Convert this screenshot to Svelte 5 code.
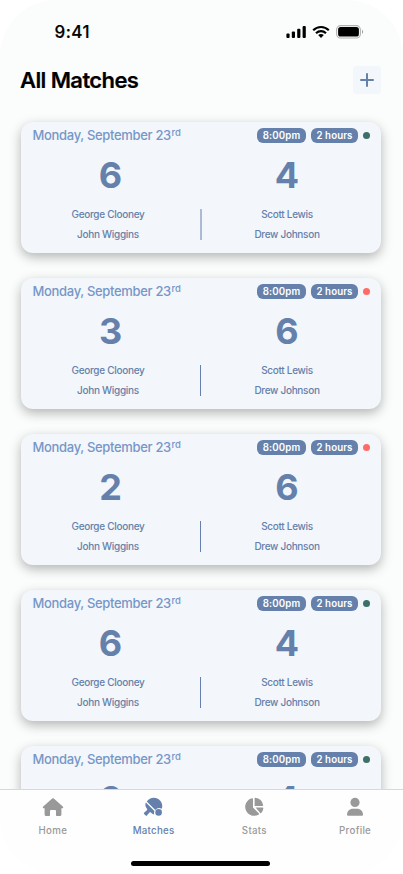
<script>
  const matches = [
    { home: 6, away: 4, status: 'won' },
    { home: 3, away: 6, status: 'lost' },
    { home: 2, away: 6, status: 'lost' },
    { home: 6, away: 4, status: 'won' },
    { home: 6, away: 4, status: 'won' }
  ];
</script>

<div class="phone">
  <div class="status">
    <span class="clock">9:41</span>
    <div class="system">
      <svg width="20" height="14" viewBox="0 0 20 14">
        <rect x="0.4" y="8.6" width="3.2" height="4.4" rx="1" />
        <rect x="5.8" y="6.4" width="3.2" height="6.6" rx="1" />
        <rect x="11.2" y="3.7" width="3.2" height="9.3" rx="1" />
        <rect x="16.6" y="1" width="3.2" height="12" rx="1" />
      </svg>
      <svg class="wifi" width="18" height="14" viewBox="0 0 18 14">
        <g fill="none" stroke="#000" stroke-width="2.1">
          <path d="M1.2 5.3C5.6.8 12.4.8 16.8 5.3" />
          <path d="M4 8.3c2.9-2.9 7.1-2.9 10 0" />
        </g>
        <path d="M6.2 10.1c1.6-1.5 4-1.5 5.6 0L9 13z" />
      </svg>
      <svg class="battery" width="28" height="14" viewBox="0 0 28 14">
        <rect x="0.6" y="0.6" width="23.8" height="12.4" rx="4" fill="none" stroke="#b0b1b0" stroke-width="1.1" />
        <rect x="2.1" y="2.1" width="20.8" height="9.4" rx="2.6" />
        <path d="M26 4.8v4.1c1.6-.7 1.6-3.4 0-4.1z" fill="#a5a6a5" />
      </svg>
    </div>
  </div>

  <header>
    <h1>All Matches</h1>
    <button aria-label="Add match">
      <svg width="14" height="14" viewBox="0 0 14 14">
        <path d="M7 1v12M1 7h12" fill="none" stroke="#6581ab" stroke-width="2" stroke-linecap="round" />
      </svg>
    </button>
  </header>

  <main>
    {#each matches as match, i}
      <article>
        <div class="top">
          <span class="date">Monday, September 23<sup>rd</sup></span>
          <span class="pill time">8:00pm</span>
          <span class="pill length">2 hours</span>
          <i class="dot {match.status}"></i>
        </div>
        <div class="teams">
          <section class="left">
            <strong>{match.home}</strong>
            <p>George Clooney</p>
            <p>John Wiggins</p>
          </section>
          <div class="divider" class:soft={i === 0}></div>
          <section class="right">
            <strong>{match.away}</strong>
            <p>Scott Lewis</p>
            <p>Drew Johnson</p>
          </section>
        </div>
      </article>
    {/each}
  </main>

  <footer>
    <nav>
      <div class="tab">
        <svg width="22" height="20" viewBox="0 0 22 20">
          <path d="M10.2 1.5q.8-.7 1.6 0l9 8q.8.8.2 1.4-.3.3-.9.3h-.7v6.4q0 1.5-1.5 1.5h-2.7q-1.2 0-1.2-1.2V14q0-1-1-1h-4q-1 0-1 1v3.9q0 1.2-1.2 1.2H4.1q-1.5 0-1.5-1.5v-6.4h-.7q-.6 0-.9-.3-.6-.6.2-1.4z" />
        </svg>
        <span>Home</span>
      </div>
      <div class="tab active">
        <svg class="paddle" width="20" height="20" viewBox="0 0 20 20">
          <path d="M3.8 4.6C6.6-.1 13.600-.4 17 3.400c2.300 2.500 2.800 5.700 1.700 8.300a5 5 0 0 0-6.400 1.400z" />
          <path d="M2.900 5.600 11.400 14.100a5 5 0 0 0-.2 3.400c-1.300-.2-2.300-.9-3.300-1.900-.5-.4-1-.4-1.400 0L3.900 18.600q-.6.6-1.200 0L1.100 17q-.6-.6 0-1.200l2.800-2.500c.5-.5.5-1 .1-1.500C2.300 10 1.900 7.700 2.900 5.600z" />
          <circle cx="15.600" cy="15.400" r="3.300" />
        </svg>
        <span>Matches</span>
      </div>
      <div class="tab">
        <svg width="20" height="20" viewBox="0 0 20 20">
          <path d="M9 1.9V10.6l5.9 5.9q.5.5 0 .9A8.9 8.900 0 1 1 8.200 1.200Q9 1.100 9 1.900z" />
          <path d="M10.6 1.4q0-.8.8-.7a8.700 8.700 0 0 1 7.800 7.500q.1.800-.7.800h-7.900z" />
          <path d="M11.600 10.500h7.100q.8 0 .7.800a8.200 8.200 0 0 1-2.200 4.700q-.5.500-1 0z" />
        </svg>
        <span>Stats</span>
      </div>
      <div class="tab">
        <svg width="20" height="20" viewBox="0 0 20 20">
          <circle cx="10" cy="5.4" r="4.6" />
          <path d="M2 17.700c0-3.400 2.500-6 6-6h4c3.500 0 6 2.600 6 6q0 1.100-1.100 1.100H3.100Q2 18.800 2 17.700z" />
        </svg>
        <span>Profile</span>
      </div>
    </nav>
    <div class="indicator"></div>
  </footer>
</div>

<style>
  :global(body) { margin: 0; background: #fff; }
  * { box-sizing: border-box; }
  .phone {
    width: 403px;
    height: 874px;
    display: flex;
    flex-direction: column;
    overflow: hidden;
    border-radius: 56px;
    background: #fbfdfc;
    font-family: Inter, "Liberation Sans", sans-serif;
    white-space: nowrap;
  }
  .status {
    height: 64px;
    flex: none;
    display: flex;
    justify-content: space-between;
    padding: 0 39px 0 54.5px;
  }
  .clock { font-size: 17px; line-height: 20px; font-weight: 500; margin-top: 22px; letter-spacing: 0.5px; -webkit-text-stroke: 0.2px #000; }
  .system { display: flex; margin-top: 25px; }
  .wifi { margin-left: 6px; }
  .battery { margin-left: 6px; }
  header {
    height: 32px;
    flex: none;
    display: flex;
    justify-content: space-between;
    align-items: center;
    padding: 0 22px 0 20px;
  }
  h1 { margin: 0; font-size: 22px; line-height: 28px; font-weight: 600; letter-spacing: -0.6px; -webkit-text-stroke: 0.2px #000; }
  button {
    width: 28px;
    height: 28px;
    padding: 0;
    border: 0;
    border-radius: 4px;
    background: #f3f6fa;
    display: flex;
    align-items: center;
    justify-content: center;
  }
  main {
    flex: 1;
    min-height: 0;
    overflow: hidden;
    padding: 26px 22px 0 21px;
    display: flex;
    flex-direction: column;
    gap: 25px;
  }
  article {
    height: 131px;
    flex: none;
    border-radius: 12px;
    background: #f3f6fa;
    color: #6581ab;
    box-shadow: 0 4px 12px rgba(0, 0, 0, 0.29);
  }
  .top { display: flex; height: 27px; align-items: center; padding: 0 11px 0 11.5px; }
  .date { flex: 1; font-size: 13px; line-height: 18px; margin-top: -1px; font-weight: 500; color: #7696c8; letter-spacing: -0.32px; }
  sup { font-size: 9.5px; line-height: 0; vertical-align: 4px; letter-spacing: 0; margin-left: 0.5px; }
  .pill {
    height: 15px;
    border-radius: 6px;
    background: #6581ab;
    color: #fff;
    text-align: center;
    font-size: 9.7px;
    line-height: 15px;
    font-weight: 600;
    letter-spacing: 0.1px;
  }
  .time { width: 49px; }
  .length { width: 47px; margin: 0 5px; }
  .dot { width: 7px; height: 7px; border-radius: 50%; }
  .won { background: #3d7068; }
  .lost { background: #ff6b66; }
  .teams { display: flex; }
  section { width: 179px; text-align: center; }
  .right { width: 172px; }
  strong { display: block; font-size: 36px; line-height: 44px; height: 54.5px; padding-top: 4px; font-weight: 700; }
  p { margin: 0; font-size: 10px; line-height: 20px; font-weight: 500; letter-spacing: -0.3px; }
  .left p { margin-right: 5px; }
  .divider { width: 1px; height: 31px; background: #6581ab; margin-top: 60px; }
  .divider.soft { width: 2px; margin-right: -1px; background: #acbbd2; }
  footer { height: 85px; flex: none; background: #fefefe; border-top: 1px solid #d5d8dc; }
  nav { display: flex; height: 72px; width: 403px; margin-left: 2.5px; }
  .tab {
    flex: 1;
    display: flex;
    flex-direction: column;
    align-items: center;
    padding-top: 7px;
    color: #999;
    font-size: 9.7px;
    line-height: 14px;
    font-weight: 500;
    letter-spacing: 0.3px;
  }
  .tab svg { fill: currentColor; }
  .tab .paddle { margin-right: 1px; }
  .tab span { margin-top: 7px; }
  .active { color: #6581ab; }
  .indicator { width: 139px; height: 5px; border-radius: 3px; background: #000; margin: -1px 0 0 131px; }
</style>
